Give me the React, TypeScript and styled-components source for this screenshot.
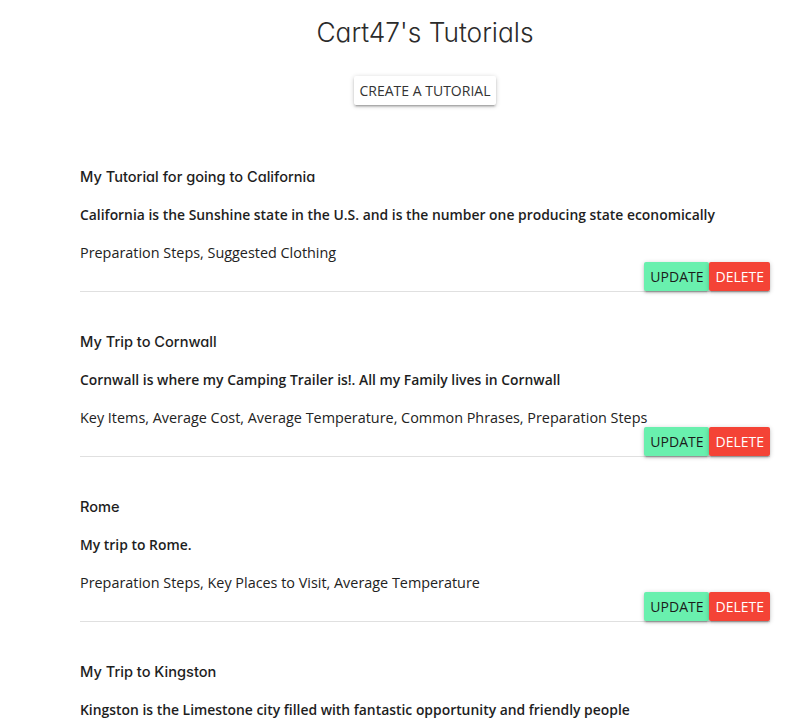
import React from "react";
import styled, { createGlobalStyle } from "styled-components";

const Global = createGlobalStyle`
  html, body { margin: 0; padding: 0; background: #fff; }
  body { font-family: "Open Sans", "Liberation Sans", sans-serif; color: #222; }
  * { box-sizing: border-box; }
`;

const Page = styled.div`
  width: 690px;
  margin-left: 80px;
  display: flex;
  flex-direction: column;
  align-items: center;
  padding-top: 15px;
`;

const Title = styled.h1`
  margin: 0;
  font-family: "Inter", "Noto Sans", sans-serif;
  font-feature-settings: "cv11";
  font-weight: 300;
  font-size: 26.3px;
  line-height: 36px;
  color: #2b2b2b;
`;

const CreateButton = styled.button`
  margin-top: 25px;
  height: 29px;
  padding: 0 6px;
  border: none;
  border-radius: 2px;
  background: #fff;
  color: #333;
  font-family: "Open Sans", sans-serif;
  font-size: 14px;
  box-shadow: 0 2px 2px 0 rgba(0,0,0,0.14), 0 3px 1px -2px rgba(0,0,0,0.12), 0 1px 5px 0 rgba(0,0,0,0.2);
`;

const List = styled.div`
  align-self: stretch;
  margin-top: 60px;
  display: flex;
  flex-direction: column;
  gap: 38px;
`;

const Card = styled.div`
  display: flex;
  flex-direction: column;
  border-bottom: 1px solid #e0e0e0;
`;

const CardTitle = styled.h4`
  margin: 0 0 14px;
  font-family: "Inter", "Noto Sans", sans-serif;
  font-feature-settings: "cv11";
  font-weight: 500;
  font-size: 14.6px;
  line-height: 24px;
  color: #1e1e1e;
`;

const Desc = styled.p`
  margin: 0 0 14px;
  font-weight: 600;
  font-size: 13.9px;
  line-height: 24px;
  color: #1e1e1e;
`;

const Tags = styled.p`
  margin: 0;
  font-size: 14.4px;
  line-height: 24px;
  color: #222;
`;

const Actions = styled.div`
  display: flex;
  justify-content: flex-end;
  margin-top: -3px;
`;

const ActionButton = styled.button<{ $variant: "update" | "delete" }>`
  height: 29px;
  padding: 0 6px;
  border: none;
  border-radius: 2px;
  font-family: "Open Sans", sans-serif;
  font-size: 14px;
  background: ${(p) => (p.$variant === "update" ? "#69f0ae" : "#f44336")};
  color: ${(p) => (p.$variant === "update" ? "#1b1b1b" : "#fff")};
  box-shadow: 0 2px 2px 0 rgba(0,0,0,0.14), 0 3px 1px -2px rgba(0,0,0,0.12), 0 1px 5px 0 rgba(0,0,0,0.2);
`;

const tutorials = [
  {
    title: "My Tutorial for going to California",
    desc: "California is the Sunshine state in the U.S. and is the number one producing state economically",
    tags: "Preparation Steps, Suggested Clothing",
  },
  {
    title: "My Trip to Cornwall",
    desc: "Cornwall is where my Camping Trailer is!. All my Family lives in Cornwall",
    tags: "Key Items, Average Cost, Average Temperature, Common Phrases, Preparation Steps",
  },
  {
    title: "Rome",
    desc: "My trip to Rome.",
    tags: "Preparation Steps, Key Places to Visit, Average Temperature",
  },
  {
    title: "My Trip to Kingston",
    desc: "Kingston is the Limestone city filled with fantastic opportunity and friendly people",
    tags: "Key Items, Average Cost",
  },
];

export default function App() {
  return (
    <>
      <Global />
      <Page>
        <Title>Cart47's Tutorials</Title>
        <CreateButton>CREATE A TUTORIAL</CreateButton>
        <List>
          {tutorials.map((t) => (
            <Card key={t.title}>
              <CardTitle>{t.title}</CardTitle>
              <Desc>{t.desc}</Desc>
              <Tags>{t.tags}</Tags>
              <Actions>
                <ActionButton $variant="update">UPDATE</ActionButton>
                <ActionButton $variant="delete">DELETE</ActionButton>
              </Actions>
            </Card>
          ))}
        </List>
      </Page>
    </>
  );
}
